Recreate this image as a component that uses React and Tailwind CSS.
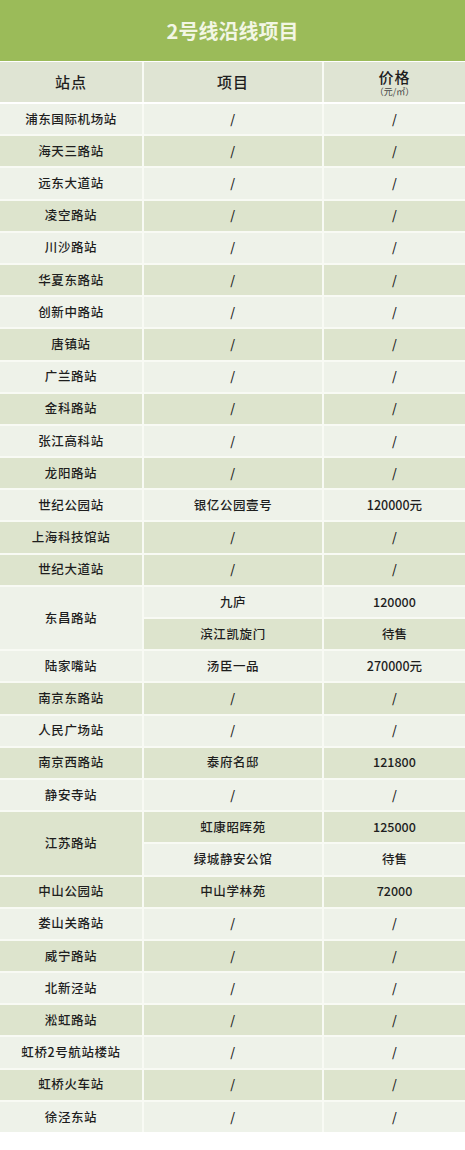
import React from "react";

const FONT = { fontFamily: '"Noto Sans CJK SC", "Noto Sans", sans-serif' };

// [station, [[project, price], ...], shade per sub-row]
const rows = [
  ["浦东国际机场站", [["/", "/"]], ["l"]],
  ["海天三路站", [["/", "/"]], ["d"]],
  ["远东大道站", [["/", "/"]], ["l"]],
  ["凌空路站", [["/", "/"]], ["d"]],
  ["川沙路站", [["/", "/"]], ["l"]],
  ["华夏东路站", [["/", "/"]], ["d"]],
  ["创新中路站", [["/", "/"]], ["l"]],
  ["唐镇站", [["/", "/"]], ["d"]],
  ["广兰路站", [["/", "/"]], ["l"]],
  ["金科路站", [["/", "/"]], ["d"]],
  ["张江高科站", [["/", "/"]], ["l"]],
  ["龙阳路站", [["/", "/"]], ["d"]],
  ["世纪公园站", [["银亿公园壹号", "120000元"]], ["l"]],
  ["上海科技馆站", [["/", "/"]], ["d"]],
  ["世纪大道站", [["/", "/"]], ["d"]],
  ["东昌路站", [["九庐", "120000"], ["滨江凯旋门", "待售"]], ["l", "l", "d"]],
  ["陆家嘴站", [["汤臣一品", "270000元"]], ["l"]],
  ["南京东路站", [["/", "/"]], ["d"]],
  ["人民广场站", [["/", "/"]], ["l"]],
  ["南京西路站", [["泰府名邸", "121800"]], ["d"]],
  ["静安寺站", [["/", "/"]], ["l"]],
  ["江苏路站", [["虹康昭晖苑", "125000"], ["绿城静安公馆", "待售"]], ["d", "d", "l"]],
  ["中山公园站", [["中山学林苑", "72000"]], ["d"]],
  ["娄山关路站", [["/", "/"]], ["l"]],
  ["威宁路站", [["/", "/"]], ["d"]],
  ["北新泾站", [["/", "/"]], ["l"]],
  ["淞虹路站", [["/", "/"]], ["d"]],
  ["虹桥2号航站楼站", [["/", "/"]], ["l"]],
  ["虹桥火车站", [["/", "/"]], ["d"]],
  ["徐泾东站", [["/", "/"]], ["l"]],
];

function bg(s) {
  return s === "d" ? "bg-[#dde4cd]" : "bg-[#eef2e9]";
}

export default function App() {
  const cells = [];
  rows.forEach(([station, items, shades], i) => {
    const multi = items.length > 1;
    cells.push(
      <div
        key={"s" + i}
        className={`${bg(shades[0])} flex items-center justify-center text-[12.5px] font-medium tracking-[0.6px] text-[#1e1e1e] ${multi ? "row-span-2" : ""}`}
      >
        {station}
      </div>
    );
    items.forEach(([proj, price], j) => {
      const shade = multi ? shades[j + 1] : shades[0];
      cells.push(
        <div key={"p" + i + "-" + j} className={`${bg(shade)} flex items-center justify-center text-[12.5px] font-medium tracking-[0.6px] text-[#1e1e1e]`}>
          {proj}
        </div>,
        <div key={"c" + i + "-" + j} className={`${bg(shade)} flex items-center justify-center text-[12.5px] font-medium text-[#1e1e1e]`}>
          {price}
        </div>
      );
    });
  });

  return (
    <div className="w-[465px] h-[1150px] bg-white" style={FONT}>
      <div className="h-[61px] bg-[#9bbb59] flex items-center justify-center">
        <span className="text-[20px] font-bold text-[#f2f6e4]">2号线沿线项目</span>
      </div>
      <div className="mt-[1px] grid grid-cols-[142px_178px_1fr] gap-[2px] bg-[#f8faf4]">
        <div className="h-[40px] bg-[#dfe4d3] flex items-center justify-center text-[15px] font-medium text-[#1e1e1e] tracking-[1px]">站点</div>
        <div className="h-[40px] bg-[#dfe4d3] flex items-center justify-center text-[15px] font-medium text-[#1e1e1e] tracking-[1px]">项目</div>
        <div className="h-[40px] bg-[#dfe4d3] flex flex-col items-center justify-center text-[#1e1e1e] leading-none">
          <span className="text-[15px] font-medium tracking-[1px]">价格</span>
          <span className="text-[9px] mt-[3px] text-[#444]">（元/㎡）</span>
        </div>
      </div>
      <div className="mt-[2px] grid grid-cols-[142px_178px_1fr] auto-rows-[30.2px] gap-[2px] bg-[#f8faf4]">
        {cells}
      </div>
    </div>
  );
}
